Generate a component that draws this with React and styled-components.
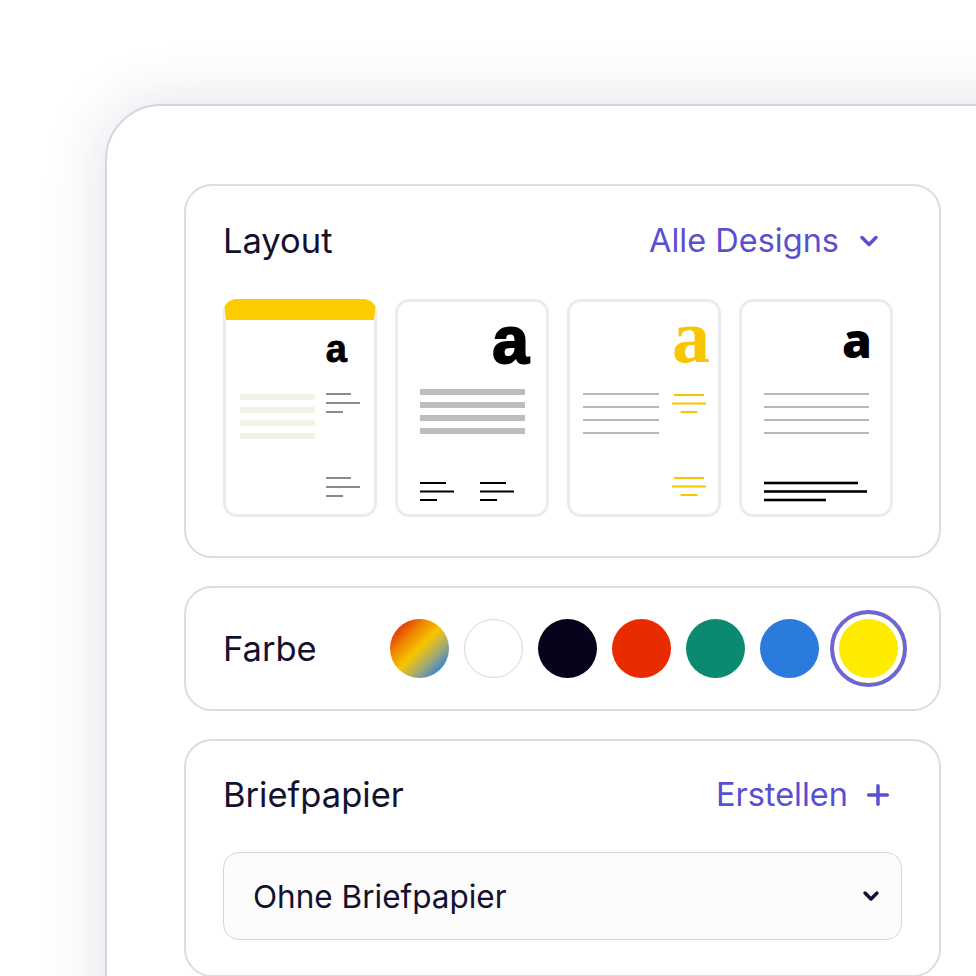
import React from "react";
import styled, { createGlobalStyle } from "styled-components";
import { ChevronDown, Plus } from "lucide-react";

const GlobalStyle = createGlobalStyle`
    * {
        box-sizing: border-box;
    }
    body {
        margin: 0;
        background: #ffffff;
        font-family: Inter, "Noto Sans", sans-serif;
        color: #14112e;
        overflow: hidden;
    }
`;

const Stage = styled.div`
    height: 976px;
    overflow: hidden;
    padding: 104px 0 0 105px;
`;

const Panel = styled.div`
    width: 1000px;
    min-height: 1000px;
    background: #ffffff;
    border: 2px solid #d5d5e0;
    border-radius: 56px;
    box-shadow: 0 0 64px rgba(40, 40, 90, 0.14);
    padding: 78px 0 0 77px;
    display: flex;
    flex-direction: column;
    gap: 28px;
`;

const Card = styled.section`
    width: 757px;
    height: ${(p) => p.$height || "auto"};
    border: 2px solid #dcdce1;
    border-radius: 28px;
    padding: ${(p) => p.$padding || "36px 37px 39px"};
    display: flex;
    flex-direction: ${(p) => (p.$row ? "row" : "column")};
    align-items: ${(p) => (p.$row ? "center" : "stretch")};
    gap: ${(p) => p.$gap || "39px"};
`;

const HeaderRow = styled.div`
    display: flex;
    justify-content: space-between;
    align-items: center;
    padding-right: ${(p) => p.$right || "19px"};
`;

const Title = styled.h2`
    margin: 0;
    font-size: 34.5px;
    line-height: 38px;
    font-weight: 400;
    color: #14112e;
    width: ${(p) => p.$width || "auto"};
    flex-shrink: 0;
`;

const Link = styled.button`
    border: 0;
    background: none;
    padding: 0;
    display: flex;
    align-items: center;
    gap: ${(p) => p.$gap || "16px"};
    font-family: inherit;
    font-size: 32.5px;
    line-height: 38px;
    font-weight: 400;
    color: #5a4fcf;
    cursor: pointer;
`;

const Tiles = styled.div`
    display: flex;
    gap: 18px;
`;

const TileBox = styled.div`
    width: 154px;
    height: 218px;
    border: 3px solid #ebebeb;
    border-top: ${(p) => (p.$band ? "21px solid #fccc00" : "3px solid #ebebeb")};
    border-radius: 14px;
    background: #ffffff;

    svg {
        display: block;
        overflow: visible;
    }
`;

const Swatches = styled.div`
    display: flex;
    align-items: center;
    gap: 15px;
`;

const Swatch = styled.button`
    width: ${(p) => (p.$selected ? "77px" : "59px")};
    height: ${(p) => (p.$selected ? "77px" : "59px")};
    margin-left: ${(p) => (p.$selected ? "-4px" : "0")};
    border-radius: 50%;
    padding: 0;
    cursor: pointer;
    background: ${(p) => p.$color};
    border: ${(p) => (p.$outline ? "1px solid #d6d6d6" : "0")};
    ${(p) =>
        p.$selected &&
        `
        border: 4px solid #6c66d9;
        box-shadow: inset 0 0 0 5px #ffffff;
    `}
`;

const Select = styled.div`
    height: 88px;
    border: 1.5px solid #d6d6da;
    border-radius: 16px;
    background: #fcfcfd;
    display: flex;
    align-items: center;
    justify-content: space-between;
    padding: 0 18px 0 29px;
    font-size: 31.5px;
    color: #14112e;
`;

const Tile = ({ band, children }) => {
    const top = band ? 21 : 3;
    const h = 218 - top - 3;
    return (
        <TileBox $band={band}>
            <svg width="148" height={h} viewBox={`3 ${top} 148 ${h}`}>
                {children}
            </svg>
        </TileBox>
    );
};

const Lines = ({ x, y, widths, step = 9, h = 2, color, align = "start", center = 0 }) =>
    widths.map((w, i) => (
        <rect
            key={i}
            x={align === "center" ? center - w / 2 : x}
            y={y + i * step - h / 2}
            width={w}
            height={h}
            fill={color}
        />
    ));

const swatches = [
    { color: "linear-gradient(135deg, #e2300c 12%, #ef8a00 32%, #f6c400 50%, #a9ab6e 68%, #2f80dc 88%)" },
    { color: "#ffffff", outline: true },
    { color: "#06041a" },
    { color: "#e82c00" },
    { color: "#0c8a71" },
    { color: "#2a7bdb" },
    { color: "#ffeb00", selected: true },
];

const App = () => {
    return (
        <>
            <GlobalStyle />
            <Stage>
                <Panel>
                    <Card>
                        <HeaderRow>
                            <Title>Layout</Title>
                            <Link>
                                Alle Designs
                                <ChevronDown size={28} strokeWidth={3} />
                            </Link>
                        </HeaderRow>
                        <Tiles>
                            <Tile band>
                                <text x="124" y="63" textAnchor="end" fontFamily="Liberation Sans, Arial, sans-serif" fontWeight="700" fontSize="38" fill="#000" stroke="#000" strokeWidth="0.8">a</text>
                                <Lines x={17} y={98} step={13} h={6} widths={[75, 75, 75, 75]} color="#f3f2e3" />
                                <Lines x={103} y={95} widths={[25, 34, 17]} color="#8a8a8a" />
                                <Lines x={103} y={179} widths={[25, 34, 17]} color="#8a8a8a" />
                            </Tile>
                            <Tile>
                                <text x="134" y="64" textAnchor="end" fontFamily="Liberation Sans, Arial, sans-serif" fontWeight="700" fontSize="66" fill="#000" stroke="#000" strokeWidth="2">a</text>
                                <Lines x={25} y={93} step={13} h={6} widths={[105, 105, 105, 105]} color="#bdbdbd" />
                                <Lines x={25} y={184} step={8.5} widths={[26, 34, 17]} color="#000" />
                                <Lines x={85} y={184} step={8.5} widths={[26, 34, 17]} color="#000" />
                            </Tile>
                            <Tile>
                                <text x="143" y="63" textAnchor="end" fontFamily="Liberation Serif, Times New Roman, serif" fontWeight="700" fontSize="76" fill="#f7c600">a</text>
                                <Lines x={16} y={95} step={13} widths={[76, 76, 76, 76]} color="#b8b8b8" />
                                <Lines align="center" center={122} y={96} step={8.5} widths={[30, 34, 17]} color="#f7c600" />
                                <Lines align="center" center={122} y={179} step={8.5} widths={[30, 34, 17]} color="#f7c600" />
                            </Tile>
                            <Tile>
                                <text x="133" y="59" textAnchor="end" fontFamily="Open Sans, sans-serif" fontWeight="800" fontSize="48" fill="#000">a</text>
                                <Lines x={25} y={95} step={13} widths={[105, 105, 105, 105]} color="#b8b8b8" />
                                <Lines x={25} y={184} step={8.5} h={2.6} widths={[94, 103, 62]} color="#000" />
                            </Tile>
                        </Tiles>
                    </Card>

                    <Card $row $padding="0 37px" $gap="0" $height="125px">
                        <Title $width="167px">Farbe</Title>
                        <Swatches>
                            {swatches.map((s, i) => (
                                <Swatch key={i} $color={s.color} $outline={s.outline} $selected={s.selected} />
                            ))}
                        </Swatches>
                    </Card>

                    <Card $padding="35px 37px 35px" $gap="38px">
                        <HeaderRow $right="8px">
                            <Title>Briefpapier</Title>
                            <Link $gap="14px">
                                Erstellen
                                <Plus size={32} strokeWidth={2.6} />
                            </Link>
                        </HeaderRow>
                        <Select>
                            Ohne Briefpapier
                            <ChevronDown size={24} strokeWidth={3.4} color="#14112e" />
                        </Select>
                    </Card>
                </Panel>
            </Stage>
        </>
    );
};

export default App;
